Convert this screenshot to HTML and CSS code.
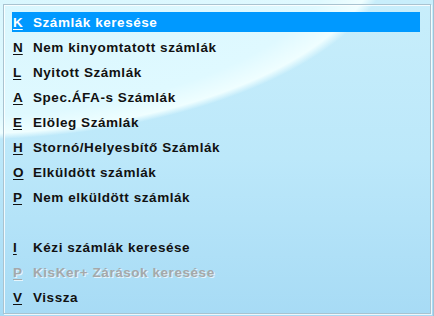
FILE: index.html
```html
<!DOCTYPE html>
<html>
<head>
<meta charset="utf-8">
<link rel="stylesheet" href="styles.css">
</head>
<body>
<div class="screen">
  <div class="frame">
    <ul class="menu">
      <li class="item active"><span class="key">K</span><span class="label">Számlák keresése</span></li>
      <li class="item"><span class="key">N</span><span class="label">Nem kinyomtatott számlák</span></li>
      <li class="item"><span class="key">L</span><span class="label">Nyitott Számlák</span></li>
      <li class="item"><span class="key">A</span><span class="label">Spec.ÁFA-s Számlák</span></li>
      <li class="item"><span class="key">E</span><span class="label">Elöleg Számlák</span></li>
      <li class="item"><span class="key">H</span><span class="label">Stornó/Helyesbítő Számlák</span></li>
      <li class="item"><span class="key">O</span><span class="label">Elküldött számlák</span></li>
      <li class="item"><span class="key">P</span><span class="label">Nem elküldött számlák</span></li>
      <li class="spacer"></li>
      <li class="item"><span class="key">I</span><span class="label">Kézi számlák keresése</span></li>
      <li class="item disabled"><span class="key">P</span><span class="label">KisKer+ Zárások keresése</span></li>
      <li class="item"><span class="key">V</span><span class="label">Vissza</span></li>
    </ul>
  </div>
</div>
</body>
</html>
```
FILE: styles.css
```css
html, body {
  margin: 0;
  padding: 0;
}
body {
  width: 434px;
  height: 316px;
  overflow: hidden;
  font-family: "Liberation Sans", Arial, sans-serif;
}
.screen {
  box-sizing: border-box;
  width: 434px;
  height: 316px;
  padding: 4px 2px 2px 3px;
  border-right: 1px solid #9fc3d6;
  background:
    radial-gradient(437px 200px at -40px -60px, #d6f5fd 0%, #dff9ff 88%, #effeff 97%, rgba(240,254,255,0) 100%),
    linear-gradient(to bottom, #c8eefb 0%, #bce8fa 50%, #a7dbf5 100%);
}
.frame {
  box-sizing: border-box;
  height: 310px;
  border: 1px solid #a9c3d0;
  box-shadow: inset 1px 1px 0 rgba(255,255,255,0.8), 1px 1px 0 rgba(255,255,255,0.8);
  padding: 7px 10px 0 8px;
}
.menu {
  list-style: none;
  margin: 0;
  padding: 0;
  display: flex;
  flex-direction: column;
  gap: 5px;
}
.item, .spacer {
  height: 20px;
}
.item {
  display: flex;
  align-items: center;
  font-size: 13.5px;
  font-weight: bold;
  color: #111;
  letter-spacing: 0.55px;
}
.key {
  width: 21px;
  padding-left: 1px;
  box-sizing: border-box;
  text-decoration: underline;
  text-underline-offset: 2px;
  letter-spacing: 0;
}
.active {
  background: #0099ff;
  color: #fff;
}
.disabled {
  color: #a5a8aa;
  text-shadow: 1px 1px 0 rgba(255,255,255,0.7);
}
```
